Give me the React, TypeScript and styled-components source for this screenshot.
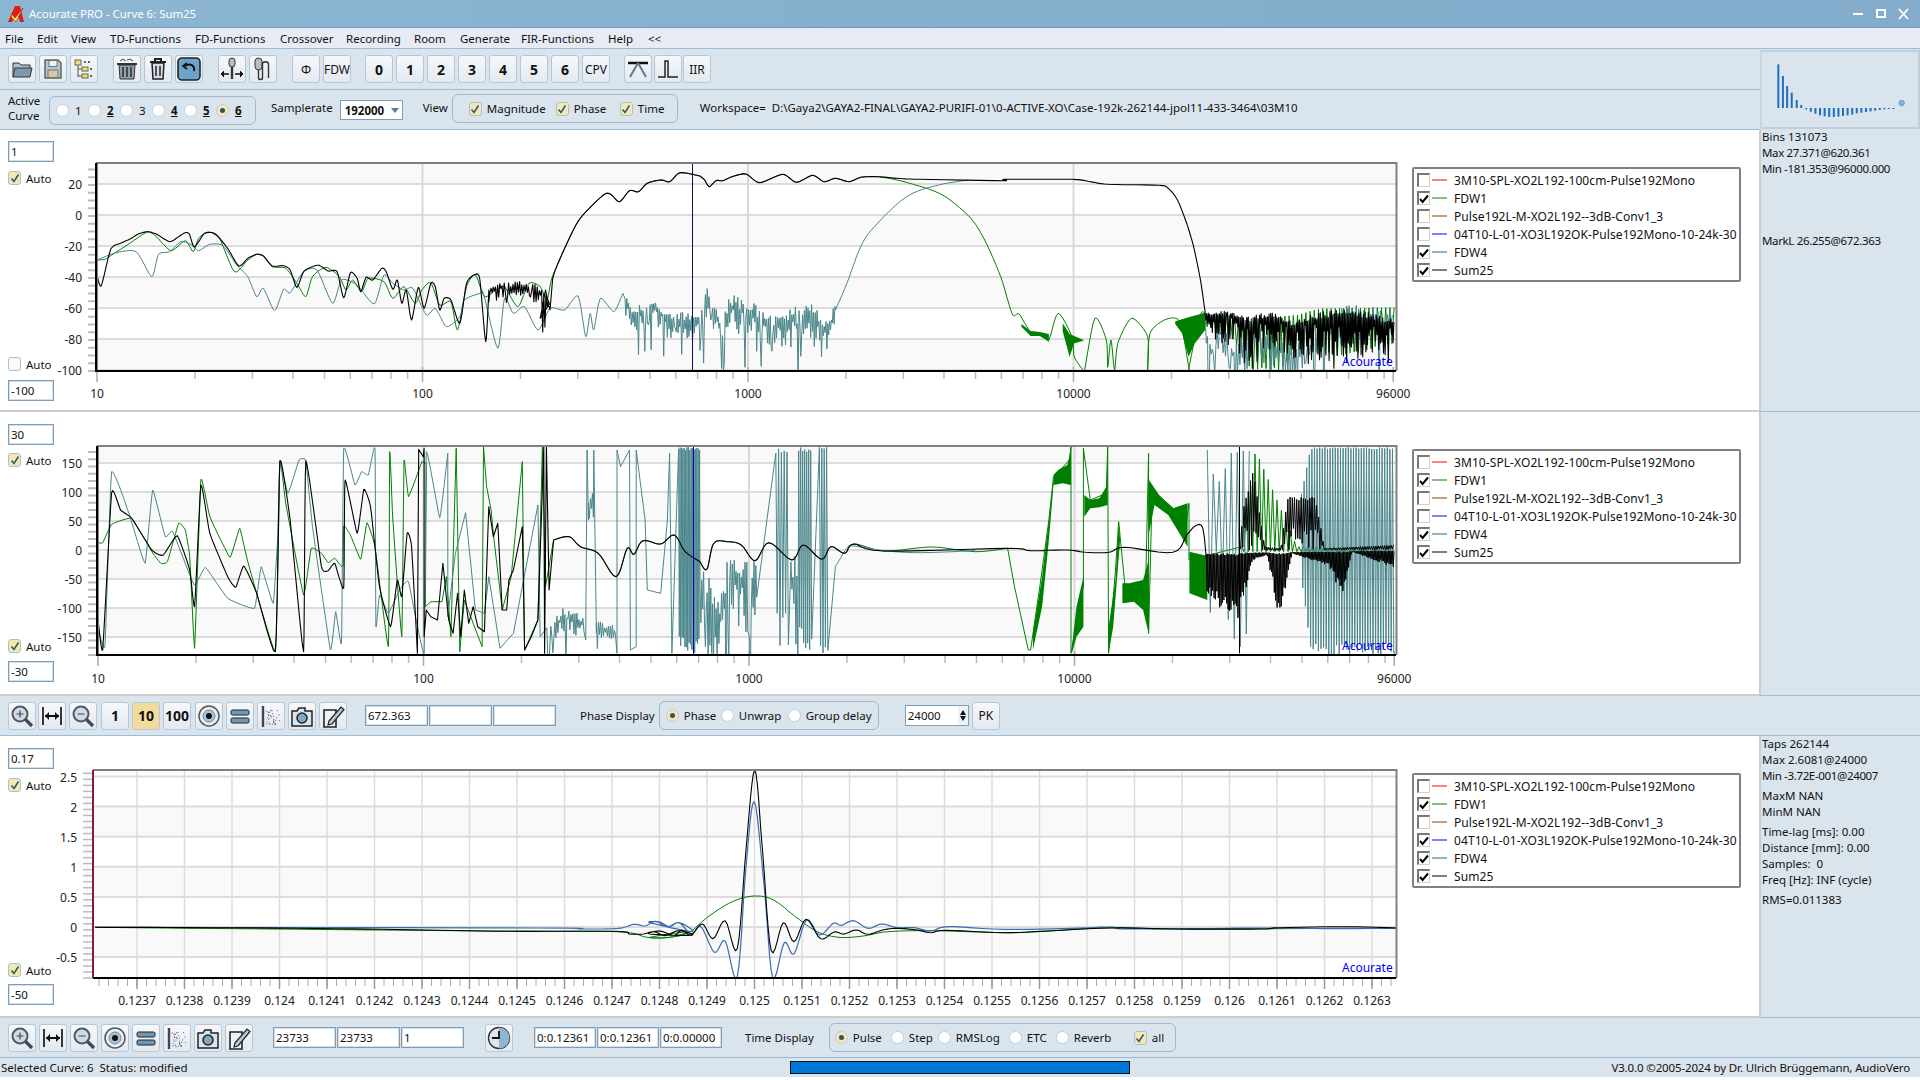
import React from 'react';
import styled, { createGlobalStyle } from 'styled-components';

type P = [number, number];

const GlobalStyle = createGlobalStyle`
  html, body { margin: 0; padding: 0; background: #fff; overflow: hidden; }
  body { font-family: "Noto Sans", "Open Sans", "Liberation Sans", sans-serif; font-size: 11.5px; color: #111; }
`;

const PANEL = '#dae4ed';
const EDGE = '#9dbbd6';

const Window = styled.div`
  width: 1920px; height: 1080px; display: flex; flex-direction: column; background: #fff; overflow: hidden;
`;
const TitleBar = styled.div`
  height: 27px; flex: none; display: flex; align-items: center; padding: 0 11px 0 8px; gap: 4px; color: #fff; font-size: 11.4px;
  background: linear-gradient(90deg, #8db6d3, #86afce 50%, #83accc); border-bottom: 1px solid #6d9bbd; box-sizing: content-box;
`;
const TitleText = styled.span`flex: 1; white-space: nowrap;`;
const WinControls = styled.div`display: flex; align-items: center; gap: 12px;`;
const MenuBar = styled.div`
  height: 20px; flex: none; background: #e7ebf3; display: flex; align-items: center; padding-left: 5px; font-size: 11.5px;
`;
const MenuItem = styled.span<{ $w: number }>`width: ${p => p.$w}px; white-space: nowrap;`;
const TopBand = styled.div`height: 81px; flex: none; display: flex; background: ${PANEL}; border-top: 1px solid ${EDGE}; box-sizing: border-box;`;
const ToolsColumn = styled.div`flex: 1; display: flex; flex-direction: column;`;
const ToolRow = styled.div`
  height: 40px; flex: none; display: flex; align-items: center; padding: 0 0 0 8px; border-bottom: 1px solid ${EDGE}; box-sizing: content-box;
`;
const OptionRow = styled.div`
  height: 35px; flex: none; display: flex; align-items: center; padding: 0 0 4px 8px; border-bottom: 1px solid ${EDGE}; box-sizing: content-box; white-space: nowrap;
`;
const BtnGroup = styled.div<{ $ml?: number; $gap?: number }>`display: flex; gap: ${p => p.$gap ?? 3}px; margin-left: ${p => p.$ml ?? 0}px;`;
const ToolBtn = styled.div<{ $w?: number; $on?: boolean; $bold?: boolean; $h?: number }>`
  width: ${p => p.$w ?? 28}px; height: ${p => p.$h ?? 28}px; flex: none; box-sizing: border-box;
  display: flex; align-items: center; justify-content: center; overflow: hidden;
  border: 1px solid #b6c8d8; border-radius: 3px; font-size: ${p => (p.$bold ? 14 : 12)}px; font-weight: ${p => (p.$bold ? 700 : 400)};
  background: ${p => (p.$on ? '#f2dc9c' : 'linear-gradient(#f6f8fb, #e3e9f1)')};
`;
const CurveLabel = styled.div`width: 41px; line-height: 15px; font-size: 11.5px; white-space: normal;`;
const GroupBox = styled.div<{ $w: number; $h?: number; $ml?: number; $mt?: number }>`
  width: ${p => p.$w}px; height: ${p => p.$h ?? 29}px; box-sizing: border-box; display: flex; align-items: center;
  border: 1px solid #9fb7cf; border-radius: 6px; margin-left: ${p => p.$ml ?? 0}px; margin-top: ${p => p.$mt ?? 0}px; flex: none;
`;
const Radio = styled.span<{ $on?: boolean }>`
  width: 13px; height: 13px; border-radius: 50%; flex: none; box-sizing: border-box; display: flex; align-items: center; justify-content: center;
  border: 1px solid #c0cfdd; background: ${p => (p.$on ? '#f3e7ae' : '#fff')};
  &::after { content: ''; width: 5px; height: 5px; border-radius: 50%; background: ${p => (p.$on ? '#33506a' : 'transparent')}; }
`;
const OptionItem = styled.label<{ $w: number; $ml?: number }>`
  width: ${p => p.$w}px; margin-left: ${p => p.$ml ?? 0}px; flex: none; display: flex; align-items: center; gap: 5px; font-size: 11.5px;
`;
const CurveNo = styled.span<{ $strong?: boolean }>`
  font-weight: ${p => (p.$strong ? 700 : 400)}; text-decoration: ${p => (p.$strong ? 'underline' : 'none')}; margin-left: 1px;
`;
const Lbl = styled.span<{ $ml?: number; $w?: number }>`
  margin-left: ${p => p.$ml ?? 0}px; ${p => (p.$w ? `width:${p.$w}px;` : '')} font-size: 11.5px; flex: none; white-space: pre;
`;
const SelectBox = styled.div`
  width: 63px; height: 20px; margin: 5px 0 0 7px; box-sizing: border-box; border: 1px solid #7f9db9; background: #fff; flex: none;
  display: flex; align-items: center; justify-content: space-between; padding: 0 3px 0 4px; font-weight: 700; font-size: 11.5px;
  &::after { content: ''; border: 4px solid transparent; border-top: 5px solid #5b7a9b; border-bottom: 0; }
`;
const CheckBoxY = styled.span<{ $on?: boolean }>`
  width: 13px; height: 14px; flex: none; box-sizing: border-box; border: 1px solid #a9bfd4; border-radius: 3px; display: flex; align-items: center; justify-content: center;
  background: ${p => (p.$on ? '#f4e8ae' : '#f8fafc')};
`;
const Thumb = styled.div`
  width: 160px; flex: none; box-sizing: border-box; margin-top: 1px; border: 2px solid #bcd0e2; border-left: 2px solid #c5d6e6; display: flex; background: ${PANEL};
`;
const Region = styled.div<{ $h: number }>`
  height: ${p => p.$h}px; flex: none; display: flex; box-sizing: border-box;
`;
const PlotPart = styled.div`
  display: flex; flex: 1; min-width: 0; border-bottom: 2px solid #ccc;
`;
const SideCol = styled.div<{ $top: number; $bottom: number }>`
  width: 56px; flex: none; box-sizing: border-box; padding: ${p => p.$top}px 0 ${p => p.$bottom}px 8px; display: flex; flex-direction: column;
`;
const Field = styled.div<{ $w?: number; $ml?: number }>`
  width: ${p => p.$w ?? 46}px; height: 21px; flex: none; box-sizing: border-box; border: 1px solid #7f9db9; background: #fff; margin-left: ${p => p.$ml ?? 0}px;
  box-shadow: 0 0 0 1px #d3dfeb inset; display: flex; align-items: center; padding: 0 2px; font-size: 11.5px; white-space: nowrap; overflow: hidden;
`;
const AutoRow = styled.label<{ $mt?: number; $mb?: number }>`
  display: flex; align-items: center; gap: 5px; font-size: 11.5px; height: 14px; margin-top: ${p => p.$mt ?? 0}px; margin-bottom: ${p => p.$mb ?? 0}px;
`;
const Spring = styled.div`flex: 1;`;
const PlotSvg = styled.svg`width: 1356px; flex: none; display: block;`;
const AxisText = styled.text<{ $c?: string }>`font-size: 12px; fill: ${p => p.$c ?? '#222'}; font-family: "Noto Sans", sans-serif;`;
const Curve = styled.path<{ $w?: number }>`fill: none; stroke-width: ${p => p.$w ?? 1}; stroke-linejoin: round;`;
const LegendSlot = styled.div<{ $top: number }>`flex: 1; padding-top: ${p => p.$top}px; box-sizing: border-box;`;
const Legend = styled.div`
  width: 329px; box-sizing: border-box; border: 2px solid #808080; border-radius: 2px; padding: 2px 0 1px 3px; background: #fff;
`;
const LegendRow = styled.div`height: 18px; display: flex; align-items: center; font-size: 12px; letter-spacing: 0.08px; white-space: nowrap;`;
const LegendCheck = styled.span`
  width: 13px; height: 14px; box-sizing: border-box; flex: none; border: 1px solid #d0d0d0; border-top: 2px solid #777; border-left: 2px solid #777; background: #fff;
  display: flex; align-items: center; justify-content: center;
`;
const Swatch = styled.span<{ $c: string }>`width: 15px; height: 2px; margin: 0 7px 0 2px; flex: none; background: ${p => p.$c};`;
const InfoPanel = styled.div`
  width: 161px; flex: none; box-sizing: border-box; background: ${PANEL}; border-left: 2px solid #ccc; border-bottom: 1px solid ${EDGE}; padding: 0 0 0 1px; font-size: 11.5px;
`;
const InfoLine = styled.div<{ $mt?: number; $tight?: boolean }>`
  height: 16px; line-height: 16px; margin-top: ${p => p.$mt ?? 0}px; white-space: pre; letter-spacing: ${p => (p.$tight ? '-0.35px' : '0')};
`;
const BarRow = styled.div`
  height: 40px; flex: none; box-sizing: border-box; background: ${PANEL}; display: flex; align-items: center; padding-left: 8px; border-bottom: 1px solid ${EDGE}; white-space: nowrap;
`;
const FieldRow = styled.div<{ $ml: number }>`display: flex; gap: 1px; margin-left: ${p => p.$ml}px; flex: none;`;
const Spin = styled.div`
  width: 64px; height: 21px; margin-left: 26px; flex: none; box-sizing: border-box; border: 1px solid #7f9db9; background: #fff; display: flex; align-items: center; justify-content: space-between; padding-left: 2px; font-size: 11.5px;
`;
const SpinArrows = styled.span`display: flex; flex-direction: column; gap: 1px; width: 10px; height: 100%; justify-content: center; align-items: center; background: #eef2f6;`;
const SpinTri = styled.span<{ $up?: boolean }>`
  border: 3px solid transparent; ${p => (p.$up ? 'border-bottom: 5px solid #111; border-top: 0;' : 'border-top: 5px solid #111; border-bottom: 0;')}
`;
const StatusBar = styled.div`
  height: 19px; flex: none; box-sizing: border-box; background: ${PANEL}; display: flex; align-items: center; padding: 0 10px 0 1px; font-size: 11.5px; white-space: pre;
`;
const StatusLeft = styled.span`width: 789px; flex: none;`;
const ProgressBar = styled.div`width: 340px; height: 13px; flex: none; box-sizing: border-box; border: 1px solid #111; background: #0078d7;`;
const StatusRight = styled.span`flex: 1; text-align: right; letter-spacing: -0.14px;`;

/* ---------- chart data helpers ---------- */
function rng(seed: number) {
  let s = seed >>> 0;
  return () => {
    s = (s + 0x6d2b79f5) >>> 0;
    let t = Math.imul(s ^ (s >>> 15), 1 | s);
    t = (t + Math.imul(t ^ (t >>> 7), 61 | t)) ^ t;
    return ((t ^ (t >>> 14)) >>> 0) / 4294967296;
  };
}
const Z = (s: string, x0: number, fx: number, y0: number): P[] =>
  s.trim().split(/\s+/).map(p => {
    const [a, b] = p.split(',').map(Number);
    return [x0 + a / fx, y0 + b / 3] as P;
  });
const L1 = (s: string) => Z(s, 0, 2.24, 130);
const R1 = (s: string) => Z(s, 700, 2.178, 130);
const L2 = (s: string) => Z(s, 0, 2.24, 420);
const R2 = (s: string) => Z(s, 700, 2.178, 420);
const L3 = (s: string) => Z(s, 0, 2.24, 750);
const R3 = (s: string) => Z(s, 650, 2.063, 750);
const sm = (p: P[], k = 0.5, n = 6): P[] => {
  const out: P[] = [];
  for (let i = 0; i < p.length - 1; i++) {
    const a = p[Math.max(i - 1, 0)];
    const b = p[i];
    const c = p[i + 1];
    const d = p[Math.min(i + 2, p.length - 1)];
    for (let j = 0; j < n; j++) {
      const t = j / n;
      const t2 = t * t;
      const t3 = t2 * t;
      const h = (u0: number, u1: number, u2: number, u3: number) => {
        const m1 = k * (u2 - u0);
        const m2 = k * (u3 - u1);
        return (2 * t3 - 3 * t2 + 1) * u1 + (t3 - 2 * t2 + t) * m1 + (-2 * t3 + 3 * t2) * u2 + (t3 - t2) * m2;
      };
      out.push([h(a[0], b[0], c[0], d[0]), h(a[1], b[1], c[1], d[1])]);
    }
  }
  out.push(p[p.length - 1]);
  return out;
};
const interp = (e: P[], x: number) => {
  if (x <= e[0][0]) return e[0][1];
  for (let i = 1; i < e.length; i++) {
    if (x <= e[i][0]) {
      const t = (x - e[i - 1][0]) / (e[i][0] - e[i - 1][0] || 1);
      return e[i - 1][1] + t * (e[i][1] - e[i - 1][1]);
    }
  }
  return e[e.length - 1][1];
};
const jag = (c: P[], amp: number, step: number, seed: number): P[] => {
  const r = rng(seed);
  const out: P[] = [];
  let sign = 1;
  for (let x = c[0][0]; x <= c[c.length - 1][0]; x += step) {
    sign = -sign;
    let d = sign > 0 ? r() * amp * 1.2 : -r() * amp * 0.6;
    if (r() < 0.08) d += r() * amp * 3.2;
    out.push([x, interp(c, x) + d]);
  }
  return out;
};
const comb = (top: P[], bot: P[], step: number, seed: number, loose = 0.15): P[] => {
  const r = rng(seed);
  const out: P[] = [];
  const x0 = top[0][0];
  const x1 = top[top.length - 1][0];
  let up = true;
  for (let x = x0; x <= x1; x += step) {
    const a = interp(top, x);
    const b = interp(bot, x);
    const k = r() * loose;
    out.push([x, up ? a + (b - a) * k * 0.15 : b - (b - a) * k]);
    up = !up;
  }
  return out;
};
const toD = (p: P[]) => 'M' + p.map(q => `${q[0].toFixed(1)} ${q[1].toFixed(1)}`).join('L');
const band = (top: P[], bot: P[]) => 'M' + [...top, ...[...bot].reverse()].map(q => `${q[0].toFixed(1)} ${q[1].toFixed(1)}`).join('L') + 'Z';

const GREEN = '#008000';
const TEAL = '#4b868b';
const BLACK = '#000';

/* Magnitude */
const magBlack: P[] = [
  ...sm(L1('218,440 227,467 248,358 270,340 290,328 310,312 330,305 350,312 380,335 400,320 415,308 424,312 434,350 445,335 458,310 475,308 490,322 510,355 535,408 555,385 575,373 590,378 610,408 635,407 650,420 665,472 680,425 700,410 715,406 735,423 755,425 770,503 785,428 800,445 808,485 820,442 835,450 855,415 865,425 880,478 890,450 900,520 910,480 922,570 937,472 950,535 965,460 975,470 985,540 995,505 1010,510 1030,580 1045,460 1065,433 1075,450 1088,635 1095,480'), 0.35),
  ...jag(L1('1095,485 1130,472 1160,470 1190,475 1210,490 1232,500'), 10, 1.1, 3),
  ...L1('1210,565 1222,480 1232,540 1238,445'),
  ...sm(L1('1238,445 1250,400 1290,285 1320,235 1355,192 1370,195 1388,215 1410,182 1430,185 1450,160 1480,150 1500,155 1520,130 1540,130 1568,138')),
  ...sm(R1('0,138 10,150 20,170 35,152 50,152 70,140 100,132 130,158 180,133 210,157 245,136 270,155 295,145 325,155 350,142 385,140 430,145 480,148 660,152 665,148 810,148 850,155 890,163 1000,166 1020,175 1040,210 1060,280 1075,350 1090,450 1100,545'), 0.4),
  ...comb(
    R1('1100,550 1140,540 1200,558 1240,543 1290,575 1380,535 1450,545 1512,570'),
    R1('1100,610 1150,650 1200,720 1250,660 1310,700 1370,720 1440,690 1512,700'), 0.8, 5, 0.85),
];
const magGreen: P[] = [
  ...sm(L1('218,390 235,388 250,375 285,345 330,306 350,320 383,362 415,332 433,365 445,325 465,307 490,320 525,425 555,390 575,373 590,378 610,410 640,415 665,460 685,500 700,440 730,412 760,440 775,480 790,450 810,485 825,445 860,455 880,505 905,470 930,520 945,480 965,458 985,525 1010,515 1025,600 1045,470 1065,435 1085,500 1110,480 1130,470 1160,530 1185,460 1210,470 1225,510 1235,450 1250,400 1290,285 1320,235 1355,192 1370,195 1388,215 1410,182 1430,185 1450,160 1480,150 1500,155 1520,130 1540,130 1568,138'), 0.35),
  ...sm(R1('0,138 10,150 20,170 35,152 50,152 70,140 100,132 130,158 180,133 210,157 245,136 270,155 295,145 325,155 350,142 385,140 430,150 500,178 540,205 590,265 620,330 655,440 680,552 695,552 720,605 750,612 760,630 780,550 810,620 815,680 833,718 835,720 838,718 860,565 885,630 888,712 895,630 903,720 910,640 940,565 975,620 975,720 980,610 1015,568 1045,575 1062,690 1065,720 1068,690 1090,555 1100,550'), 0.4),
  ...comb(
    R1('1100,550 1200,565 1300,555 1350,535 1512,532'),
    R1('1100,590 1150,610 1200,720 1265,720 1300,660 1400,680 1512,640'), 2.1, 9, 0.05),
];
const magGreenBands = [
  band(R1('700,582 720,603 740,606 760,612'), R1('700,590 720,618 740,618 760,635')),
  band(R1('790,580 805,612 835,630'), R1('790,604 805,680 815,640 835,632')),
  band(R1('1035,574 1068,560 1100,548'), R1('1035,582 1050,610 1064,680 1078,640 1100,600')),
];
const magTeal: P[] = [
  ...sm(L1('218,390 260,368 305,365 340,440 355,373 380,365 405,335 430,345 445,362 470,343 500,347 530,405 555,440 575,500 590,475 615,542 635,478 650,488 680,425 710,420 745,520 765,450 800,465 838,522 860,435 880,460 905,480 925,475 955,555 975,535 1000,590 1030,560 1040,510 1075,490 1083,490 1115,655 1130,505 1150,550 1175,530 1205,600 1232,535 1265,540 1295,498 1312,620 1322,550 1330,600 1345,505 1375,545 1395,490'), 0.35),
  ...jag(L1('1400,520 1420,560 1465,530 1490,570 1568,570'), 15, 0.9, 11),
  ...jag(R1('0,550 18,510 45,600 65,530 120,560 160,600 205,570 235,550 275,610 295,540'), 22, 0.9, 12),
  ...sm(R1('295,540 320,460 350,350 380,290 450,200 520,165 585,150')),
];
const magTealTail: P[] = jag(R1('1100,570 1110,680 1130,600 1160,670 1215,620 1300,680 1410,560 1510,580'), 22, 1.2, 14);

/* Phase */
const phBlack: P[] = [
  ...sm(L2('218,580 230,690 250,218 270,270 295,295 340,390 365,406 397,347 425,450 436,560 450,195 470,340 510,470 528,502 546,438 575,520 617,695 627,122 650,300 680,695 685,122 720,440 735,452 750,430 770,505 773,180 800,340 815,208 830,260 850,500 875,620 890,480 900,530 912,340 922,380 935,700'), 0.2),
  ...L2('938,88 948,110 950,85 950,650 955,570 965,590 980,600 992,430 1005,600 1015,640 1025,520 1032,650 1040,510 1050,610 1060,560 1070,620 1085,635 1095,260 1105,350 1115,310 1125,570 1135,570 1140,480 1150,450 1170,320 1175,690 1190,650 1205,600 1218,80 1220,700 1224,80 1230,510 1240,360'),
  ...sm(L2('1240,360 1275,350 1300,380 1340,400 1380,470 1405,385 1420,403 1440,362 1480,372 1510,345 1535,395 1568,425')),
  ...sm(R2('0,425 15,448 30,370 60,365 90,375 120,422 150,368 200,420 225,375 265,418 285,380 315,400 335,372 400,393 670,385 720,392 800,390 840,397 890,397 925,382 1030,397 1060,345 1080,317 1095,325 1103,420')),
];
const phBlackLow = comb(
  R2('1103,400 1512,392'),
  R2('1103,530 1170,610 1205,420 1235,405 1262,600 1290,400 1370,440 1400,540 1420,395 1512,445'), 0.7, 21, 0.3);
const phBlackUp = comb(
  R2('1175,380 1185,250 1205,150 1230,380 1265,385 1280,230 1340,230 1360,385 1512,375'),
  R2('1175,392 1512,392'), 1.1, 22, 0.5);
const phBlackSpike = R2('1175,80 1175,700');
const phGreen: P[] = [
  ...sm(L2('218,368 230,368 250,313 295,295 340,395 360,430 375,425 400,310 415,330 425,410 436,685 450,178 470,290 515,412 537,325 555,425 617,695 627,122 640,250 680,525 697,385 720,400 735,428 750,415 768,440 770,318 785,345 808,418 822,308 840,380 870,680 873,95 880,300 900,650 905,120 915,230 945,125'), 0.15),
  ...L2('955,130 953,560 965,545 990,545 1000,470 1010,650 1022,85 1030,695 1040,540 1080,680 1083,80 1090,200 1100,270 1105,340 1125,570 1145,470 1170,125 1175,690 1205,600 1215,80 1222,500 1240,360'),
  ...sm(L2('1240,360 1275,350 1300,380 1340,400 1380,470 1405,385 1420,403 1440,362 1480,372 1510,345 1535,395 1568,425')),
  ...sm(R2('0,425 15,448 30,370 60,365 90,375 120,422 150,368 200,420 225,375 265,418 285,380 315,400 335,372 400,393 480,383 520,382 600,395 670,385')),
  ...R2('685,500 715,690 720,690 740,500 760,300 770,170 805,120 808,80 808,700 835,500 835,85 850,240 885,220 888,80 890,700 905,450 912,305 925,490 970,530 977,100 977,640 985,210 1060,300 1065,250 1065,420'),
  ...comb(R2('1180,380 1210,90 1300,380 1340,380 1512,380'), R2('1180,395 1300,395 1512,395'), 2.2, 24, 0),
];
const phGreenBands = [
  band(R2('725,640 745,470 760,300 770,170'), R2('725,690 745,560 760,360 770,195')),
  band(R2('770,165 780,150 800,135 808,85'), R2('770,195 790,190 808,195')),
  band(R2('810,680 820,560 835,470'), R2('810,700 820,650 835,620')),
  band(R2('837,225 850,240 870,235 885,200 888,85'), R2('837,290 850,265 870,262 888,255')),
  band(R2('890,620 905,480 912,305'), R2('890,700 900,620 915,360')),
  band(R2('920,490 935,490 965,480 977,420'), R2('920,550 945,545 965,570 977,640')),
  band(R2('978,180 1000,225 1030,265 1062,250'), R2('978,340 990,255 1020,285 1062,380')),
  band(R2('1066,395 1105,408'), R2('1066,520 1105,540')),
];
const phTeal: P[] = [
  ...sm(L2('218,620 235,680 250,155 290,285 325,430 342,210 370,350 387,335 435,495 460,442 510,535 570,565 585,440 612,550 622,350 627,130 645,220 670,120 685,122 700,320 740,690 752,575 765,670 770,85 795,195 810,155 825,165 840,85 842,620 850,525 870,580 895,510 915,485 950,700 955,95 985,293 1003,100'), 0.15),
  ...L2('1003,590 1020,400 1043,278 1065,570 1085,580 1095,470 1120,685 1150,640 1205,255 1210,650'),
  ...jag(L2('1225,640 1260,590 1310,610'), 14, 1, 31),
  ...L2('1312,660 1315,90 1318,300'),
  ...jag(L2('1318,270 1330,260'), 30, 1, 32),
  ...L2('1330,90 1336,640'),
  ...jag(L2('1336,620 1380,635'), 10, 1, 33),
  ...L2('1382,700 1382,90 1390,140 1410,90 1412,690 1425,680 1425,90 1445,300 1450,510 1480,520 1495,300 1500,100 1505,700'),
  ...comb(L2('1520,82 1568,82'), L2('1520,700 1568,700'), 0.7, 34, 0.1),
  ...jag(R2('0,500 45,600 60,480 110,500 125,450'), 40, 0.9, 35),
  ...comb(R2('165,82 195,82'), R2('165,695 195,700'), 1.4, 36, 0.2),
  ...jag(R2('198,500 215,500'), 80, 1, 37),
  ...comb(R2('215,82 245,82'), R2('215,700 245,700'), 1, 38, 0.15),
  ...comb(R2('260,82 280,82'), R2('260,700 280,700'), 1.2, 39, 0.05),
  ...sm(R2('295,440 320,385 335,378 400,392 480,398 600,392')),
];
const phTealTail: P[][] = [
  comb(R2('1105,82 1125,200 1160,90 1200,90'), R2('1105,700 1125,400 1160,700 1200,700'), 3, 41, 0.1),
  comb(R2('1310,220 1330,82 1512,82'), R2('1310,480 1330,705 1512,705'), 1.3, 42, 0.06),
];

/* Pulse */
const tBlack: P[] = sm([
  ...L3('213,532 470,533 750,536 950,540 1145,544 1380,544 1410,552 1440,552 1465,545 1490,557 1520,542 1550,556'),
  ...R3('0,552 20,543 50,556 65,541 85,555 108,522 130,566 155,512 180,596 198,300 216,60 232,300 250,602 275,518 297,575 322,508 352,566 380,546 400,552 425,540 450,553 480,540 510,535 550,540 580,548 610,541 730,548 820,543 950,534 1090,537 1260,537 1300,533 1440,530 1540,534'),
]);
const tBlue: P[] = sm([
  ...L3('213,532 1200,534 1300,537 1385,535 1420,523 1445,528 1468,514 1495,530 1522,518 1550,545'),
  ...R3('0,518 20,516 40,530 60,518 85,552 105,530 133,607 155,573 180,680 198,350 215,155 235,400 253,682 277,578 297,612 323,510 350,555 378,520 395,526 420,512 450,535 478,522 510,533 545,533 580,543 615,530 730,538 870,535 950,531 985,537 1190,535 1300,534 1410,536 1540,535'),
]);
const tGreen: P[] = sm([
  ...L3('213,532 1100,543 1380,545 1450,562 1500,562 1540,545'),
  ...R3('0,562 40,562 80,548 120,500 170,455 215,438 255,450 300,500 345,545 390,562 440,558 490,545 580,542 730,548 800,545 950,533 1100,537 1540,534'),
]);

const CURVES = [
  { name: '3M10-SPL-XO2L192-100cm-Pulse192Mono', c: '#ff8080' },
  { name: 'FDW1', c: '#80c080' },
  { name: 'Pulse192L-M-XO2L192--3dB-Conv1_3', c: '#c0a080' },
  { name: '04T10-L-01-XO3L192OK-Pulse192Mono-10-24k-30', c: '#8080ff' },
  { name: 'FDW4', c: '#90b8b8' },
  { name: 'Sum25', c: '#808080' },
];

const Tick = () => (
  <svg width="10" height="10" viewBox="0 0 10 10"><path d="M1.5 5.5L4 8.5 8.5 1.5" fill="none" stroke="#2f5a78" strokeWidth="1.6" /></svg>
);
const BlackTick = () => (
  <svg width="10" height="10" viewBox="0 0 10 10"><path d="M1 5l2.6 3L9 1.5" fill="none" stroke="#000" strokeWidth="2" /></svg>
);

const LegendBox = ({ on }: { on: number[] }) => (
  <Legend>
    {CURVES.map((c, i) => (
      <LegendRow key={c.name}>
        <LegendCheck>{on.includes(i) ? <BlackTick /> : null}</LegendCheck>
        <Swatch $c={c.c} />
        {c.name}
      </LegendRow>
    ))}
  </Legend>
);

/* ---------- plots ---------- */
type FreqProps = {
  top: number; bottom: number; x0: number; left: number; vbY: number; vbH: number; ys: { l: string; y: number }[]; minor: number; labelY: number; marker: number; markerColor: string; acY: number; id: string;
  bands: [number, number][]; children: React.ReactNode;
};
const FreqPlot = (p: FreqProps) => {
  const X = (f: number) => p.x0 + 325.5 * (Math.log10(f) - 1);
  const ticks: number[] = [];
  for (const d of [10, 100, 1000, 10000]) for (let m = 2; m < 10; m++) if (d * m < 96000) ticks.push(X(d * m));
  const mt: number[] = [];
  for (let y = p.bottom; y >= p.top + 2; y -= p.minor) mt.push(y);
  return (
    <PlotSvg viewBox={`56 ${p.vbY} 1356 ${p.vbH}`} height={p.vbH}>
      <defs><clipPath id={p.id}><rect x={p.left} y={p.top} width={1397 - p.left} height={p.bottom - p.top} /></clipPath></defs>
      {p.bands.map(b => <rect key={b[0]} x={p.left} y={b[0]} width={1397 - p.left} height={b[1] - b[0]} fill="#f9f9f9" />)}
      {p.ys.map(g => <line key={g.l} x1={p.left} x2={1396} y1={g.y} y2={g.y} stroke="#dcdcdc" strokeWidth="2" />)}
      {[10, 100, 1000, 10000].map(f => <line key={f} x1={X(f)} x2={X(f)} y1={p.top} y2={p.bottom} stroke="#d8d8d8" strokeWidth="2" />)}
      {mt.map(y => <line key={y} x1={88} x2={p.left} y1={y} y2={y} stroke="#bbb" strokeWidth="2" />)}
      {ticks.map(x => <line key={x} x1={x} x2={x} y1={p.bottom} y2={p.bottom + 8} stroke="#bbb" strokeWidth="1.5" />)}
      {[10, 100, 1000, 10000, 96000].map(f => <line key={f} x1={X(f)} x2={X(f)} y1={p.bottom - 4} y2={p.bottom + 11} stroke="#aaa" strokeWidth="1.5" />)}
      <g clipPath={`url(#${p.id})`}>{p.children}
        <line x1={p.marker + 0.5} x2={p.marker + 0.5} y1={p.top} y2={p.bottom} stroke={p.markerColor} strokeWidth="1" />
      </g>
      <path d={`M${p.left} ${p.bottom}V${p.top}H1396.5V${p.bottom}`} fill="none" stroke="#808080" strokeWidth="2" />
      <path d={`M${p.left - 1} ${p.top}V${p.bottom}H1396`} fill="none" stroke="#000" strokeWidth="2" />
      {p.ys.map(g => <AxisText key={g.l} x={82} y={g.y + 5} textAnchor="end">{g.l}</AxisText>)}
      {[10, 100, 1000, 10000].map(f => <AxisText key={f} x={X(f)} y={p.labelY} textAnchor="middle">{f}</AxisText>)}
      <AxisText x={X(96000)} y={p.labelY} textAnchor="middle">96000</AxisText>
      <AxisText x={1342} y={p.acY} $c="#0000ff">Acourate</AxisText>
    </PlotSvg>
  );
};

const TimePlot = () => {
  const L = 93; const T = 770; const B = 978;
  const Y = (v: number) => 927 - v * 60.2;
  const VX = (i: number) => 137 + i * 47.5;
  const names = Array.from({ length: 27 }, (_, i) => String(+(0.1237 + i * 0.0001).toFixed(4)));
  const minor: number[] = [];
  for (let x = 99; x < 1394; x += 9.5) minor.push(x);
  const ym: number[] = [];
  for (let y = 978; y > 772; y -= 6.02) ym.push(y);
  return (
    <PlotSvg viewBox="56 736 1356 280" height={280}>
      <defs><clipPath id="tc"><rect x={L} y={T} width={1397 - L} height={B - T} /></clipPath></defs>
      {[[2, 1.5], [1, 0.5], [0, -0.5]].map(b => <rect key={b[0]} x={L} y={Y(b[0])} width={1397 - L} height={Y(b[1]) - Y(b[0])} fill="#f9f9f9" />)}
      {[2.5, 2, 1.5, 1, 0.5, 0, -0.5].map(v => <line key={v} x1={L} x2={1396} y1={Y(v)} y2={Y(v)} stroke="#dcdcdc" strokeWidth="2" />)}
      {names.map((n, i) => <line key={n} x1={VX(i)} x2={VX(i)} y1={T} y2={B} stroke="#dcdcdc" strokeWidth="1.5" />)}
      {ym.map(y => <line key={y} x1={83} x2={L} y1={y} y2={y} stroke="#bbb" strokeWidth="1.5" />)}
      {minor.map(x => <line key={x} x1={x} x2={x} y1={B} y2={B + 8} stroke="#aaa" strokeWidth="1" />)}
      {names.map((n, i) => <line key={n} x1={VX(i)} x2={VX(i)} y1={B} y2={B + 11} stroke="#999" strokeWidth="1.5" />)}
      <g clipPath="url(#tc)">
        <Curve d={toD(tGreen)} stroke={GREEN} />
        <Curve d={toD(tBlue)} stroke="#3a6cb4" $w={1.2} />
        <Curve d={toD(tBlack)} stroke={BLACK} $w={1.1} />
      </g>
      <path d={`M${L} ${T}H1396.5V${B}`} fill="none" stroke="#808080" strokeWidth="2" />
      <path d={`M${L} ${B}H1396`} fill="none" stroke="#000" strokeWidth="2" />
      <path d={`M${L} ${T}V${B}`} fill="none" stroke="#8b1a3a" strokeWidth="2" />
      {[2.5, 2, 1.5, 1, 0.5, 0, -0.5].map(v => <AxisText key={v} x={77} y={Y(v) + 5} textAnchor="end">{v}</AxisText>)}
      {names.map((n, i) => <AxisText key={n} x={VX(i)} y={1005} textAnchor="middle">{n}</AxisText>)}
      <AxisText x={1342} y={972} $c="#0000ff">Acourate</AxisText>
    </PlotSvg>
  );
};

/* ---------- icons ---------- */
const I = styled.svg`width: 24px; height: 24px; display: block;`;
const Ic = ({ children }: { children: React.ReactNode }) => <I viewBox="0 0 24 24" fill="none">{children}</I>;
const Folder = () => <Ic><path d="M3 20V6h6l2 2h9v3" stroke="#333" fill="#a9c1cf" /><path d="M3 20l2-9h17l-2 9z" fill="#7c9aab" stroke="#333" /></Ic>;
const Floppy = () => <Ic><path d="M4 3h13l3 3v15H4z" fill="#a9c9de" stroke="#665" strokeWidth="1.5" /><rect x="8" y="3.5" width="8" height="6" fill="#eef2f6" stroke="#776" /><rect x="7" y="13" width="10" height="7.5" fill="#d9c5ab" stroke="#776" /></Ic>;
const TreeIcon = () => <Ic><path d="M6 6v14M6 12h4M6 19h4" stroke="#555" /><rect x="3" y="3" width="6" height="5" fill="#f1df6a" stroke="#665" /><rect x="10" y="10" width="6" height="4" fill="#f1df6a" stroke="#665" /><rect x="10" y="17" width="6" height="4" fill="#f1df6a" stroke="#665" /><path d="M12 5h2m2 0h2M18 12h2M18 19h2" stroke="#333" strokeWidth="1.5" /></Ic>;
const TrashAll = () => <Ic><path d="M5 4l3-2 3 2M12 3l3-1 3 2" stroke="#555" fill="#ccd" /><path d="M2 7h20" stroke="#333" strokeWidth="2" /><path d="M4 8l1 14h14l1-14z" fill="#8fa3b2" stroke="#333" /><path d="M8 10v10M12 10v10M16 10v10" stroke="#222" strokeWidth="1.4" /></Ic>;
const Trash = () => <Ic><path d="M9 4V2h6v2M4 5h16" stroke="#222" strokeWidth="2" /><path d="M6 6l1 16h10l1-16z" fill="#d4dce4" stroke="#222" strokeWidth="1.5" /><path d="M10 9v10M14 9v10" stroke="#222" strokeWidth="1.5" /></Ic>;
const Undo = () => <Ic><rect x="1" y="1" width="22" height="22" rx="4" fill="#6ea3c9" stroke="#222" strokeWidth="1.6" /><path d="M8 9c5-3 10-1 9 5" stroke="#111" strokeWidth="2" /><path d="M10 6l-4 3 4 3" stroke="#111" strokeWidth="1.6" /></Ic>;
const MicArrows = () => <Ic><rect x="9" y="1" width="6" height="9" rx="3" fill="#aebfcb" stroke="#333" /><path d="M12 10v12" stroke="#333" strokeWidth="2.4" /><path d="M1 17h8M15 17h8" stroke="#111" strokeWidth="1.6" /><path d="M4 14l-3 3 3 3M20 14l3 3-3 3" fill="#111" stroke="#111" /></Ic>;
const MicCable = () => <Ic><rect x="4" y="1" width="7" height="12" rx="3.5" fill="#aebfcb" stroke="#333" /><path d="M7.5 13v8c0 2 4 2 4 0V7c0-3 6-3 6 0v14" stroke="#333" strokeWidth="1.4" /></Ic>;
const NotchIcon = () => <Ic><path d="M2 6h20" stroke="#111" strokeWidth="2.6" /><path d="M12 6L4 20M12 6l8 14" stroke="#5f7a8c" strokeWidth="2" /></Ic>;
const PulseIcon = () => <Ic><path d="M2 20h7V4h3v16h10" stroke="#222" strokeWidth="1.5" /></Ic>;
const ZoomIcon = ({ plus }: { plus?: boolean }) => <Ic><circle cx="10" cy="10" r="7.5" fill="#cfdbe5" stroke="#556" strokeWidth="2" /><path d="M15.5 15.5L22 22" stroke="#3a4a5a" strokeWidth="3.2" />{plus ? <path d="M10 6.5v7M6.5 10h7" stroke="#445" strokeWidth="1.2" /> : <path d="M6.5 10h7" stroke="#445" strokeWidth="1.2" />}</Ic>;
const FitIcon = () => <Ic><path d="M3 3v18M21 3v18" stroke="#222" strokeWidth="1.8" /><path d="M5 12h14" stroke="#111" strokeWidth="2" /><path d="M9 8l-4 4 4 4zM15 8l4 4-4 4z" fill="#111" /></Ic>;
const TargetIcon = () => <Ic><circle cx="12" cy="12" r="10" fill="#e8eff5" stroke="#555" strokeWidth="1.5" /><circle cx="12" cy="12" r="6" fill="#a5c4dc" stroke="#789" /><circle cx="12" cy="12" r="3" fill="#111" /></Ic>;
const BarsIcon = () => <Ic><rect x="3" y="6" width="18" height="5" rx="1.5" fill="#6f97b8" stroke="#222" /><rect x="3" y="14" width="18" height="5" rx="1.5" fill="#6f97b8" stroke="#222" /></Ic>;
const ScatterIcon = () => { const r = rng(7); return <Ic><path d="M4 2v21" stroke="#445" strokeWidth="2.4" />{Array.from({ length: 34 }, (_, i) => <circle key={i} cx={7 + r() * 14} cy={6 + r() * 15} r="0.6" fill="#667" />)}</Ic>; };
const CameraIcon = () => <Ic><path d="M2 7h5l2-3h6v3h7v15H2z" fill="#dbe4ec" stroke="#222" strokeWidth="1.5" /><circle cx="12" cy="14" r="5" fill="#7fa7c6" stroke="#222" strokeWidth="1.5" /></Ic>;
const NoteIcon = () => <Ic><path d="M3 6h12v17H3z" fill="#eef2f5" stroke="#222" strokeWidth="1.6" /><path d="M8 17L20 3l3 2.5L11 20l-4 1z" fill="#b4c8d8" stroke="#222" strokeWidth="1.2" /></Ic>;
const ClockIcon = () => <Ic><circle cx="12" cy="12" r="10.5" fill="#dfe7ee" stroke="#333" strokeWidth="1.4" /><path d="M12 1.5a10.5 10.5 0 0 1 0 21z" fill="#8fb6d4" /><path d="M12 5v7H5" stroke="#111" strokeWidth="1.8" /></Ic>;

const Logo = () => (
  <svg width="17" height="18" viewBox="0 0 17 18">
    <path d="M0 17L7 1h5l4 16h-4l-1-4H6l-2 4z" fill="#e01b1b" />
    <path d="M4 9l3 4 8-10-7 14-5-5z" fill="#ffe14a" stroke="#a00" strokeWidth=".5" />
  </svg>
);
const Controls = () => (
  <WinControls>
    <svg width="12" height="12" viewBox="0 0 12 12"><path d="M1 6h10" stroke="#fff" strokeWidth="2" /></svg>
    <svg width="10" height="12" viewBox="0 0 10 12"><rect x="1" y="2" width="8" height="7" fill="none" stroke="#fff" strokeWidth="2" /></svg>
    <svg width="11" height="12" viewBox="0 0 11 12"><path d="M1 1l9 10M10 1L1 11" stroke="#fff" strokeWidth="1.8" /></svg>
  </WinControls>
);

const MENU: [string, number][] = [['File', 32], ['Edit', 34], ['View', 39], ['TD-Functions', 85], ['FD-Functions', 85], ['Crossover', 66], ['Recording', 68], ['Room', 46], ['Generate', 61], ['FIR-Functions', 87], ['Help', 40], ['<<', 30]];

const Thumbnail = () => {
  const pos: [number, number][] = [[1195, 190], [1207, 225], [1218, 255], [1230, 275], [1243, 297], [1255, 312]];
  const neg: [number, number][] = [[1268, 325], [1280, 332], [1292, 338], [1304, 343], [1316, 346], [1328, 348], [1340, 348], [1352, 347], [1364, 345], [1376, 343], [1388, 341], [1400, 337], [1412, 335], [1424, 333], [1436, 331], [1448, 329], [1460, 327], [1472, 325], [1484, 324], [1496, 323]];
  const tx = (z: number) => z / 2.613;
  return (
    <svg width="156" height="75" viewBox="442 51 156 75">
      {pos.map(b => <rect key={b[0]} x={tx(b[0])} y={b[1] / 3} width="2" height={107 - b[1] / 3} fill="#1f6fc0" />)}
      {neg.map(b => <rect key={b[0]} x={tx(b[0])} y={107} width="2" height={Math.max(1, b[1] / 3 - 107)} fill="#1f6fc0" />)}
      <circle cx={tx(1520)} cy={102} r="2.6" fill="#8fb4d6" stroke="#5f95c8" />
    </svg>
  );
};

const magYs = [['20', 184], ['0', 215], ['-20', 246], ['-40', 277], ['-60', 308], ['-80', 339], ['-100', 370]].map(a => ({ l: a[0] as string, y: a[1] as number }));
const phYs = [['150', 463], ['100', 492], ['50', 521], ['0', 550], ['-50', 579], ['-100', 608], ['-150', 637]].map(a => ({ l: a[0] as string, y: a[1] as number }));

const Opt = ({ n, w, on, strong }: { n: string; w: number; on?: boolean; strong?: boolean }) => (
  <OptionItem $w={w}><Radio $on={on} /><CurveNo $strong={strong}>{n}</CurveNo></OptionItem>
);
const Chk = ({ t, w, on = true, ml }: { t: string; w: number; on?: boolean; ml?: number }) => (
  <OptionItem $w={w} $ml={ml}><CheckBoxY $on={on}>{on ? <Tick /> : null}</CheckBoxY>{t}</OptionItem>
);

export default function App() {
  return (
    <Window>
      <GlobalStyle />
      <TitleBar>
        <Logo />
        <TitleText>Acourate PRO - Curve 6: Sum25</TitleText>
        <Controls />
      </TitleBar>
      <MenuBar>{MENU.map(m => <MenuItem key={m[0]} $w={m[1]}>{m[0]}</MenuItem>)}</MenuBar>
      <TopBand>
        <ToolsColumn>
          <ToolRow>
            <BtnGroup><ToolBtn><Folder /></ToolBtn><ToolBtn><Floppy /></ToolBtn><ToolBtn><TreeIcon /></ToolBtn></BtnGroup>
            <BtnGroup $ml={15}><ToolBtn><TrashAll /></ToolBtn><ToolBtn><Trash /></ToolBtn><ToolBtn><Undo /></ToolBtn></BtnGroup>
            <BtnGroup $ml={15}><ToolBtn><MicArrows /></ToolBtn><ToolBtn><MicCable /></ToolBtn></BtnGroup>
            <BtnGroup $ml={15}><ToolBtn>Φ</ToolBtn><ToolBtn>FDW</ToolBtn></BtnGroup>
            <BtnGroup $ml={14}>
              {['0', '1', '2', '3', '4', '5', '6'].map(n => <ToolBtn key={n} $bold>{n}</ToolBtn>)}
              <ToolBtn>CPV</ToolBtn>
            </BtnGroup>
            <BtnGroup $ml={14} $gap={1.5}><ToolBtn><NotchIcon /></ToolBtn><ToolBtn><PulseIcon /></ToolBtn><ToolBtn>IIR</ToolBtn></BtnGroup>
          </ToolRow>
          <OptionRow>
            <CurveLabel>Active Curve</CurveLabel>
            <GroupBox $w={207} $mt={6}>
              <Lbl $w={6} />
              <Opt n="1" w={32} />
              <Opt n="2" w={32} strong />
              <Opt n="3" w={32} />
              <Opt n="4" w={32} strong />
              <Opt n="5" w={32} strong />
              <Opt n="6" w={32} on strong />
            </GroupBox>
            <Lbl $ml={15}>Samplerate</Lbl>
            <SelectBox>192000</SelectBox>
            <Lbl $ml={20}>View</Lbl>
            <GroupBox $w={226} $ml={4} $mt={2}>
              <Chk t="Magnitude" w={87} ml={16} />
              <Chk t="Phase" w={64} />
              <Chk t="Time" w={50} />
            </GroupBox>
            <Lbl $ml={22}>Workspace=  D:\Gaya2\GAYA2-FINAL\GAYA2-PURIFI-01\0-ACTIVE-XO\Case-192k-262144-jpol11-433-3464\03M10</Lbl>
          </OptionRow>
        </ToolsColumn>
        <Thumb><Thumbnail /></Thumb>
      </TopBand>

      <Region $h={283}>
        <PlotPart>
          <SideCol $top={12} $bottom={9}>
            <Field>1</Field>
            <AutoRow $mt={9}><CheckBoxY $on><Tick /></CheckBoxY>Auto</AutoRow>
            <Spring />
            <AutoRow $mb={9}><CheckBoxY />Auto</AutoRow>
            <Field>-100</Field>
          </SideCol>
          <FreqPlot id="mc" top={163} bottom={371} x0={97} left={97} vbY={129} vbH={281} ys={magYs} minor={7.75} labelY={398} marker={692} markerColor="#10105c" acY={366}
            bands={[[163, 184], [215, 246], [277, 308], [339, 371]]}>
            <Curve d={toD(magGreen)} stroke={GREEN} />
            {magGreenBands.map(d => <path key={d} d={d} fill={GREEN} />)}
            <Curve d={toD(magTeal)} stroke={TEAL} />
            <Curve d={toD(magTealTail)} stroke={TEAL} />
            <Curve d={toD(magBlack)} stroke={BLACK} $w={1.1} />
          </FreqPlot>
          <LegendSlot $top={38}><LegendBox on={[1, 4, 5]} /></LegendSlot>
        </PlotPart>
        <InfoPanel>
          <InfoLine>Bins 131073</InfoLine>
          <InfoLine $tight>Max 27.371@620.361</InfoLine>
          <InfoLine $tight>Min -181.353@96000.000</InfoLine>
          <InfoLine $mt={56} $tight>MarkL 26.255@672.363</InfoLine>
        </InfoPanel>
      </Region>

      <Region $h={284}>
        <PlotPart>
          <SideCol $top={12} $bottom={12}>
            <Field>30</Field>
            <AutoRow $mt={8}><CheckBoxY $on><Tick /></CheckBoxY>Auto</AutoRow>
            <Spring />
            <AutoRow $mb={8}><CheckBoxY $on><Tick /></CheckBoxY>Auto</AutoRow>
            <Field>-30</Field>
          </SideCol>
          <FreqPlot id="pc" top={446} bottom={655} x0={98} left={98} vbY={412} vbH={282} ys={phYs} minor={7.25} labelY={683} marker={693} markerColor="#0000c8" acY={650}
            bands={[[446, 463], [492, 521], [550, 579], [608, 637]]}>
            <Curve d={toD(phGreen)} stroke={GREEN} />
            {phGreenBands.map(d => <path key={d} d={d} fill={GREEN} />)}
            <Curve d={toD(phTeal)} stroke={TEAL} />
            {phTealTail.map((t, i) => <Curve key={i} d={toD(t)} stroke={TEAL} />)}
            <Curve d={toD(phBlack)} stroke={BLACK} $w={1.1} />
            <Curve d={toD(phBlackLow)} stroke={BLACK} />
            <Curve d={toD(phBlackUp)} stroke={BLACK} />
            <Curve d={toD(phBlackSpike)} stroke={BLACK} />
          </FreqPlot>
          <LegendSlot $top={37}><LegendBox on={[1, 4, 5]} /></LegendSlot>
        </PlotPart>
        <InfoPanel />
      </Region>

      <BarRow>
        <BtnGroup><ToolBtn><ZoomIcon plus /></ToolBtn></BtnGroup>
        <BtnGroup $ml={2}><ToolBtn><FitIcon /></ToolBtn><ToolBtn><ZoomIcon /></ToolBtn></BtnGroup>
        <BtnGroup $ml={4}>
          <ToolBtn $bold>1</ToolBtn><ToolBtn $bold $on>10</ToolBtn><ToolBtn $bold>100</ToolBtn>
        </BtnGroup>
        <BtnGroup $ml={4}><ToolBtn><TargetIcon /></ToolBtn><ToolBtn><BarsIcon /></ToolBtn><ToolBtn><ScatterIcon /></ToolBtn><ToolBtn><CameraIcon /></ToolBtn><ToolBtn><NoteIcon /></ToolBtn></BtnGroup>
        <FieldRow $ml={18}><Field $w={63}>672.363</Field><Field $w={63} /><Field $w={63} /></FieldRow>
        <Lbl $ml={24}>Phase Display</Lbl>
        <GroupBox $w={220} $ml={4}>
          <Lbl $w={6} />
          <OptionItem $w={55}><Radio $on />Phase</OptionItem>
          <OptionItem $w={67}><Radio />Unwrap</OptionItem>
          <OptionItem $w={85}><Radio />Group delay</OptionItem>
        </GroupBox>
        <Spin>24000<SpinArrows><SpinTri $up /><SpinTri /></SpinArrows></Spin>
        <BtnGroup $ml={3}><ToolBtn>PK</ToolBtn></BtnGroup>
      </BarRow>

      <Region $h={282}>
        <PlotPart>
          <SideCol $top={12} $bottom={11}>
            <Field>0.17</Field>
            <AutoRow $mt={9}><CheckBoxY $on><Tick /></CheckBoxY>Auto</AutoRow>
            <Spring />
            <AutoRow $mb={7}><CheckBoxY $on><Tick /></CheckBoxY>Auto</AutoRow>
            <Field>-50</Field>
          </SideCol>
          <TimePlot />
          <LegendSlot $top={37}><LegendBox on={[1, 3, 4, 5]} /></LegendSlot>
        </PlotPart>
        <InfoPanel>
          <InfoLine>Taps 262144</InfoLine>
          <InfoLine>Max 2.6081@24000</InfoLine>
          <InfoLine $tight>Min -3.72E-001@24007</InfoLine>
          <InfoLine $mt={4}>MaxM NAN</InfoLine>
          <InfoLine>MinM NAN</InfoLine>
          <InfoLine $mt={4}>Time-lag [ms]: 0.00</InfoLine>
          <InfoLine>Distance [mm]: 0.00</InfoLine>
          <InfoLine>Samples:  0</InfoLine>
          <InfoLine>Freq [Hz]: INF (cycle)</InfoLine>
          <InfoLine $mt={4}>RMS=0.011383</InfoLine>
        </InfoPanel>
      </Region>

      <BarRow>
        <BtnGroup><ToolBtn><ZoomIcon plus /></ToolBtn><ToolBtn><FitIcon /></ToolBtn><ToolBtn><ZoomIcon /></ToolBtn><ToolBtn><TargetIcon /></ToolBtn><ToolBtn><BarsIcon /></ToolBtn><ToolBtn><ScatterIcon /></ToolBtn><ToolBtn><CameraIcon /></ToolBtn><ToolBtn><NoteIcon /></ToolBtn></BtnGroup>
        <FieldRow $ml={20}><Field $w={63}>23733</Field><Field $w={63}>23733</Field><Field $w={63}>1</Field></FieldRow>
        <BtnGroup $ml={21}><ToolBtn><ClockIcon /></ToolBtn></BtnGroup>
        <FieldRow $ml={21}><Field $w={62}>0:0.12361</Field><Field $w={62}>0:0.12361</Field><Field $w={62}>0:0.00000</Field></FieldRow>
        <Lbl $ml={23}>Time Display</Lbl>
        <GroupBox $w={347} $ml={15}>
          <Lbl $w={5} />
          <OptionItem $w={56}><Radio $on />Pulse</OptionItem>
          <OptionItem $w={47}><Radio />Step</OptionItem>
          <OptionItem $w={71}><Radio />RMSLog</OptionItem>
          <OptionItem $w={47}><Radio />ETC</OptionItem>
          <OptionItem $w={78}><Radio />Reverb</OptionItem>
          <Chk t="all" w={30} />
        </GroupBox>
      </BarRow>

      <StatusBar>
        <StatusLeft>Selected Curve: 6  Status: modified</StatusLeft>
        <ProgressBar />
        <StatusRight>V3.0.0 ©2005-2024 by Dr. Ulrich Brüggemann, AudioVero</StatusRight>
      </StatusBar>
    </Window>
  );
}
